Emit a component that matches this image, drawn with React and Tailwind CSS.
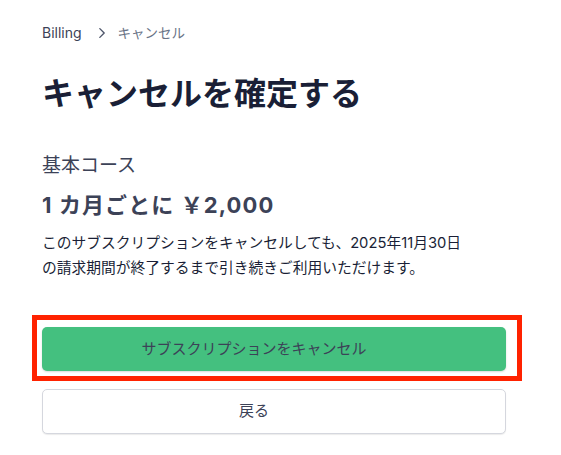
import React from "react";

const font = {
	fontFamily: '"Inter", "Noto Sans CJK JP", sans-serif',
};

function Chevron() {
	return (
		<svg
			viewBox="0 0 16 16"
			className="w-[14px] h-[14px]"
			fill="none"
			stroke="currentColor"
			strokeWidth="1.6"
			strokeLinecap="round"
			strokeLinejoin="round"
		>
			<path d="M5.5 3 L10.5 8 L5.5 13" />
		</svg>
	);
}

export default function App() {
	return (
		<div className="min-h-screen bg-white" style={font}>
			<div className="w-[464px] ml-[42px] pt-[23px]">
				{/* Breadcrumb */}
				<nav className="flex items-center text-[14px] leading-[20px]">
					<span className="text-[#3c4257]">Billing</span>
					<span className="ml-[13px] mr-[9px] text-[#4f566b]">
						<Chevron />
					</span>
					<span className="text-[13.5px] text-[#697386]">キャンセル</span>
				</nav>

				<h1 className="mt-[29px] text-[32px] leading-[44px] font-bold text-[#1a1f36]">
					キャンセルを確定する
				</h1>

				<div className="mt-[37px]">
					<p className="text-[19px] leading-[26px] text-[#3c4257]">
						基本コース
					</p>
					<p className="mt-[12px] text-[22px] leading-[28px] font-bold tracking-[0.05em] text-[#3c4257]">
						1 カ月ごとに ￥2,000
					</p>
					<p className="mt-[12px] text-[14.75px] leading-[25px] text-[#1a1f36]">
						このサブスクリプションをキャンセルしても、2025年11月30日
						<br />
						の請求期間が終了するまで引き続きご利用いただけます。
					</p>
				</div>

				<div className="mt-[46px] relative">
					<div className="absolute left-[-10px] right-[-16px] top-[-12px] bottom-[-10px] border-[5px] border-[#ff2200] pointer-events-none" />
					<button className="w-full h-[44px] pr-[40px] rounded-[5px] bg-[#44c07f] shadow-[0_1px_2px_rgba(0,0,0,0.15)] text-[15px] font-normal text-[#3c4257]">
						サブスクリプションをキャンセル
					</button>
				</div>

				<button className="mt-[18px] w-full h-[45px] pr-[40px] rounded-[5px] bg-white border border-[#d5d7de] shadow-[0_1px_1px_rgba(0,0,0,0.08)] text-[15px] font-normal text-[#3c4257]">
					戻る
				</button>
			</div>
		</div>
	);
}
